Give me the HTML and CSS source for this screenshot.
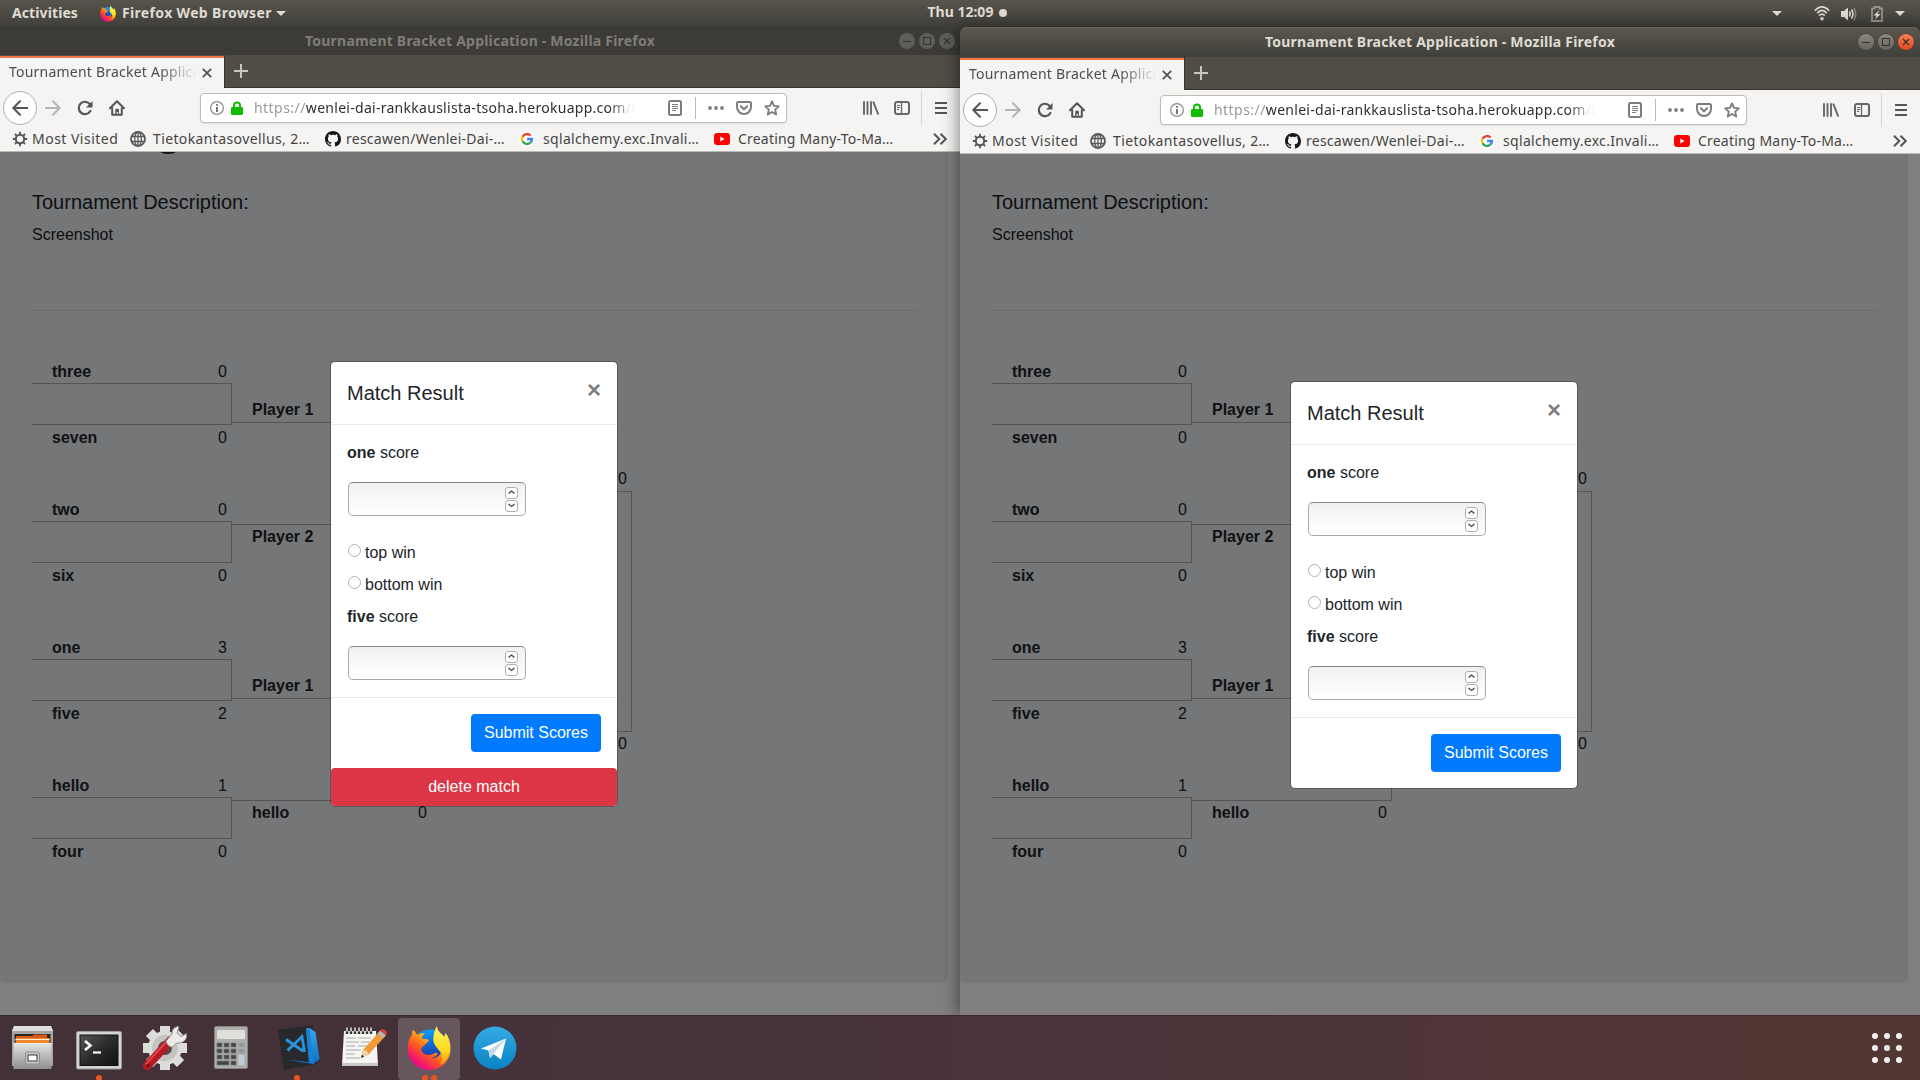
FILE: index.html
```
<!DOCTYPE html>
<html lang="en">
<head>
<meta charset="utf-8">
<title>Desktop</title>
<link rel="stylesheet" href="styles.css">
</head>
<body>
<svg class="defs" width="0" height="0" aria-hidden="true">
  <defs>
    <linearGradient id="g-flame" x1="0.9" y1="0.1" x2="0.2" y2="0.95">
      <stop offset="0" stop-color="#fff44f"/><stop offset=".3" stop-color="#ffb921"/><stop offset=".6" stop-color="#ff5a1f"/><stop offset=".85" stop-color="#f5156c"/><stop offset="1" stop-color="#d0109a"/>
    </linearGradient>
    <linearGradient id="g-wing" x1="0" y1="0" x2="0" y2="1"><stop offset="0" stop-color="#fff36a"/><stop offset=".6" stop-color="#ffdc1e"/><stop offset="1" stop-color="#ff9a16"/></linearGradient>
    <linearGradient id="g-globe" x1="0" y1="0" x2="0" y2="1"><stop offset="0" stop-color="#0a9dff"/><stop offset="1" stop-color="#20218f"/></linearGradient>
    <linearGradient id="g-metal" x1="0" y1="0" x2="0" y2="1"><stop offset="0" stop-color="#e4e4e2"/><stop offset="1" stop-color="#8f8f8d"/></linearGradient>
    <linearGradient id="g-screen" x1="0" y1="0" x2="1" y2="1"><stop offset="0" stop-color="#555"/><stop offset=".5" stop-color="#2b2b2b"/><stop offset="1" stop-color="#111"/></linearGradient>
    <linearGradient id="g-tg" x1="0" y1="0" x2="0" y2="1"><stop offset="0" stop-color="#34aae4"/><stop offset="1" stop-color="#0b82c2"/></linearGradient>
    <linearGradient id="g-vs" x1="0" y1="0" x2="0" y2="1"><stop offset="0" stop-color="#3ba4ee"/><stop offset="1" stop-color="#0b72c4"/></linearGradient>
  </defs>
  <symbol id="firefox" viewBox="0 0 44 46">
    <circle cx="23" cy="22" r="17.500" fill="url(#g-globe)"/>
    <path d="M6 5c2 1 3.500 3 4 5 2-1.500 5-2 8-1.500-2 1.500-3 3-3 5 2 .5 5 0 7 1.500-1 3-4 3.500-5 6-3 1.500-3.500 4-1.500 6.500 2.500 3 8 3 11.500 1 2.500-1.300 4-.5 3.500.8-1.500 2.500-4 3.500-7 3.700 8 1.500 13-6 11-13l4-12c3 3.500 5 9 5 15.500C43.500 36 34 45 22 45S.5 35.500.5 23.500C.5 17 3 12 5 10 4.500 8 5 6 6 5z" fill="url(#g-flame)"/>
    <path d="M30 1c0 5 4 7 7 10.500 5 6 6.500 13 4 20-1.500 4-5 7-8 8 3-5 3-9 0-13-5-6-7.500-9-6.500-15C27 6.500 28.500 3 30 1z" fill="url(#g-wing)"/>
  </symbol>
  <symbol id="info" viewBox="0 0 14 14"><circle cx="7" cy="7" r="6.400" fill="none" stroke="#8c8c8c" stroke-width="1.200"/><path d="M6 3h2v1.800H6zM6 6h2v5H6z" fill="#777"/></symbol>
  <symbol id="lock" viewBox="0 0 12 14"><path d="M3 7V4.500a3 3 0 0 1 6 0V7" fill="none" stroke="#12bc00" stroke-width="2"/><rect y="6" width="12" height="8" rx="1.200" fill="#12bc00"/></symbol>
  <symbol id="back" viewBox="0 0 16 16"><path d="M15.500 8H1.500M8 1.300 1.300 8 8 14.700" fill="none" stroke="currentColor" stroke-width="2" stroke-linecap="round" stroke-linejoin="round"/></symbol>
  <symbol id="forward" viewBox="0 0 16 16"><path d="M.5 8h14M8 1.300 14.700 8 8 14.700" fill="none" stroke="currentColor" stroke-width="2" stroke-linecap="round" stroke-linejoin="round"/></symbol>
  <symbol id="reload" viewBox="0 0 16 16"><path d="M13 4.300A6.200 6.200 0 1 0 13.400 11" fill="none" stroke="currentColor" stroke-width="2.200" stroke-linecap="round"/><path d="M15.500 1v6.500H9z" fill="currentColor"/></symbol>
  <symbol id="home" viewBox="0 0 16 16"><path d="M1 8.300 8 1.300l7 7M3.200 8v6.800h9.600V8" fill="none" stroke="currentColor" stroke-width="2" stroke-linecap="round" stroke-linejoin="round"/><path d="M6.300 15V9.500a.8.800 0 0 1 .8-.8h2a.8.800 0 0 1 .8.800V15H9v-3H7.700v3z" fill="currentColor"/></symbol>
  <symbol id="reader" viewBox="0 0 14 16"><rect x="1" y="1" width="12" height="14" rx="1.500" fill="none" stroke="#7d7d7d" stroke-width="2"/><path d="M4 4.500h6M4 6.500h6M4 8.500h6M4 10.500h4" stroke="#7d7d7d"/></symbol>
  <symbol id="dots" viewBox="0 0 16 4"><circle cx="2" cy="2" r="1.900" fill="#7d7d7d"/><circle cx="8" cy="2" r="1.900" fill="#7d7d7d"/><circle cx="14" cy="2" r="1.900" fill="#7d7d7d"/></symbol>
  <symbol id="pocket" viewBox="0 0 16 14"><path d="M2.200 1h11.600A1.200 1.200 0 0 1 15 2.200V6A7 7 0 0 1 1 6V2.200A1.200 1.200 0 0 1 2.200 1zM4.800 5.300 8 8.300l3.200-3" fill="none" stroke="#7d7d7d" stroke-width="2" stroke-linecap="round" stroke-linejoin="round"/></symbol>
  <symbol id="star" viewBox="0 0 16 16"><path d="m8 1.400 2 4.500 4.800.5-3.600 3.200 1 4.900L8 12l-4.200 2.500 1-4.900L1.200 6.400 6 5.900z" fill="none" stroke="#7d7d7d" stroke-width="1.900" stroke-linejoin="round"/></symbol>
  <symbol id="library" viewBox="0 0 16 14"><path d="M1 1v12M4.500 1v12M8 1v12M10.500 1.300 15 12.800" fill="none" stroke="#666" stroke-width="1.900" stroke-linecap="round"/></symbol>
  <symbol id="sidebar" viewBox="0 0 16 14"><rect x="1" y="1" width="14" height="12" rx="2" fill="none" stroke="#666" stroke-width="2"/><path d="M7.500 1v12" stroke="#666" stroke-width="1.300"/><path d="M3 4.500h3M3 6.500h3M3 8.500h2" stroke="#666"/></symbol>
  <symbol id="menu" viewBox="0 0 12 12"><path d="M0 1h12M0 6h12M0 11h12" stroke="#555" stroke-width="2"/></symbol>
  <symbol id="gear" viewBox="0 0 16 16"><circle cx="8" cy="8" r="4.200" fill="none" stroke="#555" stroke-width="2"/><path d="M8 .8v3M8 12.200v3M.8 8h3M12.200 8h3M3 3l1.800 1.800M11.200 11.200 13 13M3 13l1.800-1.800M11.200 4.800 13 3" stroke="#555" stroke-width="1.800"/></symbol>
  <symbol id="globe" viewBox="0 0 16 16"><g fill="none" stroke="#5a5a5a" stroke-width="1.300"><circle cx="8" cy="8" r="7" stroke-width="1.900"/><ellipse cx="8" cy="8" rx="3.300" ry="7"/><path d="M8 1v14M1.500 5.500h13M1.500 10.500h13"/></g></symbol>
  <symbol id="github" viewBox="0 0 16 16"><path fill="#181717" d="M8 0C3.580 0 0 3.580 0 8c0 3.540 2.290 6.530 5.470 7.590.4.070.55-.17.55-.38 0-.19-.01-.82-.01-1.490-2.010.37-2.530-.49-2.690-.94-.09-.23-.48-.94-.82-1.130-.28-.15-.68-.52-.01-.53.63-.01 1.080.58 1.230.82.720 1.210 1.870.87 2.330.66.070-.52.280-.87.510-1.070-1.780-.2-3.640-.89-3.640-3.950 0-.87.310-1.590.82-2.150-.08-.2-.36-1.020.08-2.120 0 0 .67-.21 2.200.82.640-.18 1.320-.27 2-.27s1.360.09 2 .27c1.530-1.040 2.200-.82 2.200-.82.440 1.100.16 1.920.08 2.120.51.560.82 1.270.82 2.150 0 3.070-1.870 3.750-3.650 3.950.29.250.54.730.54 1.480 0 1.070-.01 1.930-.01 2.200 0 .21.150.46.550.38A8.010 8.010 0 0 0 16 8c0-4.420-3.580-8-8-8z"/></symbol>
  <symbol id="google" viewBox="0 0 16 16"><circle cx="8" cy="8" r="8" fill="#fff"/><g fill="none" stroke-width="2.400"><path d="M11.600 4.600A5 5 0 0 0 3.500 5.800" stroke="#ea4335"/><path d="M3.500 5.800a5 5 0 0 0 0 4.500" stroke="#fbbc05"/><path d="M3.500 10.300a5 5 0 0 0 7.800 1.400" stroke="#34a853"/><path d="M11.300 11.700A5 5 0 0 0 13 8H8" stroke="#4285f4"/></g></symbol>
  <symbol id="youtube" viewBox="0 0 16 12"><rect width="16" height="12" rx="3" fill="#f00"/><path d="M6.300 3.500v5L10.700 6z" fill="#fff"/></symbol>
  <symbol id="chevrons" viewBox="0 0 14 12"><path d="m1 .7 5.300 5.300L1 11.300M7.500.7 12.800 6l-5.300 5.300" fill="none" stroke="#555" stroke-width="2"/></symbol>
  <symbol id="cross" viewBox="0 0 10 10"><path d="m.8.8 8.400 8.400M9.200.8.800 9.200" stroke="currentColor" stroke-width="1.800"/></symbol>
  <symbol id="plus" viewBox="0 0 14 14"><path d="M7 0v14M0 7h14" stroke="#c8c6c0" stroke-width="2"/></symbol>
  <symbol id="caret" viewBox="0 0 10 5"><path d="M0 0h10L5 5z" fill="currentColor"/></symbol>
  <symbol id="win-min" viewBox="0 0 16 16"><path d="M4 8.500h8" stroke="#33322e"/></symbol>
  <symbol id="win-max" viewBox="0 0 16 16"><rect x="4.500" y="4.500" width="7" height="7" fill="none" stroke="#33322e"/></symbol>
  <symbol id="win-close" viewBox="0 0 16 16"><path d="m5 5 6 6M11 5l-6 6" stroke="#33322e" stroke-width="1.200"/></symbol>
</svg>

<div class="desktop">
  <header class="panel">
    <div class="panel-side">
      <span class="panel-text activities">Activities</span>
      <svg class="panel-firefox" width="16" height="17"><use href="#firefox"/></svg>
      <span class="panel-text app-name">Firefox Web Browser</span>
      <svg class="app-caret" width="10" height="5"><use href="#caret"/></svg>
    </div>
    <div class="clock"><span class="panel-text clock-text">Thu 12:09</span><i class="clock-dot"></i></div>
    <div class="panel-side tray">
      <svg class="tray-menu" width="10" height="5"><use href="#caret"/></svg>
      <svg class="tray-wifi" width="16" height="15" viewBox="0 0 16 15" fill="none" stroke="#dfdbd2" stroke-width="1.700"><path d="M1 4.800C5-.5 11-.5 15 4.800M3.200 7.300c3-3.800 6.600-3.800 9.600 0M5.200 9.700c1.900-2.200 3.700-2.200 5.600 0"/><circle cx="8" cy="12.700" r="1.800" fill="#dfdbd2" stroke="none"/></svg>
      <svg class="tray-volume" width="16" height="14" viewBox="0 0 16 14"><path d="M0 4h3l4-3.500v13L3 10H0z" fill="#dfdbd2"/><path d="M8.500 4.500q1.500 2.500 0 5M10.500 2.500q3 4.500 0 9" fill="none" stroke="#dfdbd2" stroke-width="1.600"/><path d="M13 1q3.500 6 0 12" fill="none" stroke="#88867e" stroke-width="1.500"/></svg>
      <svg class="tray-battery" width="12" height="16" viewBox="0 0 12 16"><path d="M1 2.500h2.500V1h5v1.500H11V15H1z" fill="none" stroke="#96938a" stroke-width="1.800"/><path d="M8.500 4 2.500 9.500h3L4 13.500 9.500 8h-3z" fill="#dfdbd2"/></svg>
      <svg width="10" height="5"><use href="#caret"/></svg>
    </div>
  </header>

  <main class="workspace" id="workspace"></main>

  <footer class="dock">
    <div class="dock-slot">
      <svg width="44" height="46" viewBox="0 0 44 46"><path d="M3 1h37l2 5v35H1V6z" fill="#a5a5a3"/><path d="M3 1h37l2 5H1z" fill="#dededc"/><rect x="3.500" y="9" width="36" height="10" fill="#2b2422"/><path d="M5 11h16l2-1.500h13V14H5z" fill="#d55a1e"/><rect x="4.500" y="13" width="34" height="5" fill="#f0862d"/><path d="M4.500 14.500h34" stroke="#fff1cf" stroke-width="1.200"/><path d="M2.500 18h38v26h-38z" fill="url(#g-metal)"/><path d="M2.500 18.500h38" stroke="#eee"/><rect x="14.500" y="27" width="14" height="12" rx="2" fill="#c9c9c7" stroke="#8d8d8b"/><rect x="17" y="30" width="9" height="6" fill="#fff" stroke="#555" stroke-width="1.200"/></svg>
    </div>
    <div class="dock-slot">
      <svg width="46" height="46" viewBox="0 0 46 46"><rect x=".5" y="6.500" width="45" height="37.500" rx="1.500" fill="#d4d4d2" stroke="#9a9a98"/><rect x="4" y="10" width="38" height="30.500" fill="url(#g-screen)" stroke="#111"/><path d="m9 16 5.500 4.500L9 25" fill="none" stroke="#fff" stroke-width="2.500"/><path d="M17 27.500h8" stroke="#fff" stroke-width="2.200"/></svg>
      <span class="running"><i></i></span>
    </div>
    <div class="dock-slot">
      <svg width="46" height="46" viewBox="0 0 46 46"><g fill="#dcdcda"><circle cx="23" cy="23" r="17"/><path d="M18 1h10v44H18zM1 18h44v10H1z"/><path d="M18 1h10v44H18zM1 18h44v10H1z" transform="rotate(45 23 23)"/></g><circle cx="23" cy="23" r="13" fill="#c4c4c2"/><circle cx="23" cy="23" r="7" fill="#55484b"/><path d="M5 41 29 15" stroke="#b11c25" stroke-width="8.500" stroke-linecap="round"/><path d="M4 39 26 15" stroke="#e3434a" stroke-width="2" stroke-linecap="round"/><path d="m24 16 6-7q-.5-6 5.500-7.500l1.500.5-2 6 4 3.500 5.500-3q1 7-5 9-3 1-5 .5l-4 4q-5 0-6.500-6z" fill="#ebebe9" stroke="#8e8e8c"/><circle cx="6" cy="40.500" r="1.500" fill="#5c1116"/></svg>
    </div>
    <div class="dock-slot">
      <svg width="34" height="44" viewBox="0 0 34 44"><rect x=".5" y=".5" width="33" height="42" rx="1.500" fill="#adadab" stroke="#868684"/><rect x="3" y="4" width="28" height="9" rx="1" fill="#dfe0da"/><g fill="#454745" stroke="#767876" stroke-width=".7"><rect x="3" y="17" width="5" height="4"/><rect x="10" y="17" width="5" height="4"/><rect x="17" y="17" width="5" height="4"/><rect x="3" y="23" width="5" height="4"/><rect x="10" y="23" width="5" height="4"/><rect x="17" y="23" width="5" height="4"/><rect x="3" y="29" width="5" height="4"/><rect x="10" y="29" width="5" height="4"/><rect x="17" y="29" width="5" height="4"/><rect x="3" y="35" width="12" height="4"/><rect x="17" y="35" width="5" height="4"/></g><g fill="#8b9ba4"><rect x="24.500" y="17" width="6" height="4"/><rect x="24.500" y="23" width="6" height="4"/><rect x="24.500" y="29" width="6" height="10" fill="#c1cbd3"/></g></svg>
    </div>
    <div class="dock-slot slot-code">
      <svg width="42" height="46" viewBox="0 0 42 46"><path d="m0 5 35-5 4 39-33 6z" fill="#27292d"/><path d="M7 34.500 31 37l-3-33.500L31.500 3l6 4L41.500 34l-6 5z" fill="url(#g-vs)"/><path d="M28 3.500 31.500 3 35.500 39l-4.500-2z" fill="#1683d4"/><path d="M8 14.500 25 26M9.500 25.500 24 11.500l2.500 15.500" fill="none" stroke="#2b93de" stroke-width="2.800"/></svg>
      <span class="running"><i></i></span>
    </div>
    <div class="dock-slot slot-notes">
      <svg width="46" height="44" viewBox="0 0 46 44"><path d="M3 5h32l2 34H1z" fill="#f5f5f3"/><path d="M1 37h36v3H1z" fill="#c9c9c4"/><path d="M5 12h10M17 12h13M5 16h13M20 16h9M5 20h9M17 20h9M5 24h15M5 28h9M5 32h14" stroke="#a9aba5" stroke-width="1.200"/><path d="M6 2v6M10 2v6M14 2v6M18 2v6M22 2v6M26 2v6M30 2v6" stroke="#34302f" stroke-width="2.400"/><path d="M6 1.500v4M10 1.500v4M14 1.500v4M18 1.500v4M22 1.500v4M26 1.500v4M30 1.500v4" stroke="#e8e8e6" stroke-width="1.500"/><path d="m20 32 2-8L38 6l6 4.500-16.500 18z" fill="#f29a35"/><path d="m20 32 2-8q5 0 5.500 4.500z" fill="#ecd3a8"/><path d="m20 32 1-3.300 2 1.800z" fill="#222"/><path d="m36.500 7.500 2.500-3 6 4.500-2.500 3.300z" fill="#b7b7b5"/><path d="m39 4.500 2-1.500q4.500.5 5 4.500L45 9z" fill="#e23a3a"/></svg>
    </div>
    <div class="dock-slot active">
      <svg width="44" height="46"><use href="#firefox"/></svg>
      <span class="running"><i></i><i></i></span>
    </div>
    <div class="dock-slot">
      <svg width="44" height="44" viewBox="0 0 44 44"><circle cx="22" cy="22" r="21.500" fill="url(#g-tg)"/><path d="m8 22.500 25-10-5 21-7.500-5.500-3.500 4-1.500-7.500z" fill="#fff"/><path d="M15.500 24.500 33 12.500 20.500 28l-3.500 4z" fill="#c8daea"/></svg>
    </div>
    <svg class="app-grid" width="30" height="30" viewBox="0 0 30 30" fill="#eee"><circle cx="3" cy="3" r="3"/><circle cx="15" cy="3" r="3"/><circle cx="27" cy="3" r="3"/><circle cx="3" cy="15" r="3"/><circle cx="15" cy="15" r="3"/><circle cx="27" cy="15" r="3"/><circle cx="3" cy="27" r="3"/><circle cx="15" cy="27" r="3"/><circle cx="27" cy="27" r="3"/></svg>
  </footer>
</div>
<script src="app.js"></script>
</body>
</html>
```
FILE: styles.css
```
* { box-sizing: border-box; }
body { margin: 0; background: #3c3b37; }
svg { display: block; flex: none; }
.defs { position: absolute; }
.desktop { width: 1920px; height: 1080px; display: flex; flex-direction: column; overflow: hidden; font-family: "Noto Sans", sans-serif; }

/* Top panel */
.panel { height: 27px; flex: none; display: flex; justify-content: space-between; align-items: center; background: linear-gradient(#57544b, #403f3a); color: #dfdbd2; }
.panel-side { flex: 1; display: flex; align-items: center; }
.panel-text { font-weight: 700; font-size: 14px; line-height: 26px; height: 27px; white-space: nowrap; }
.activities { width: 88px; padding-left: 12px; letter-spacing: .1px; }
.panel-firefox { margin-left: 12px; }
.app-name { width: 154px; margin-left: 6px; letter-spacing: .34px; }
.clock { display: flex; align-items: center; gap: 5px; margin-left: 8px; width: 82px; transform: translate(12px, -1px); }
.clock-text { width: 66px; }
.clock-dot { width: 8px; height: 8px; border-radius: 50%; background: #dfdbd2; }
.tray { justify-content: flex-end; padding-right: 15px; }
.tray-menu { margin-right: 32px; }
.tray-wifi { margin-right: 11px; }
.tray-volume { margin-right: 14px; }
.tray-battery { margin-right: 12px; }

/* Windows */
.workspace { height: 988px; flex: none; display: grid; grid-template-columns: 960px 960px; background: #3c3b37; }
.window { height: 988px; display: flex; flex-direction: column; position: relative; overflow: hidden; --title-h: 28px; }
.window.focused { --title-h: 30px; overflow: visible; box-shadow: -2px 0 16px rgba(0,0,0,.45); border-radius: 7px 7px 0 0; }
.titlebar { height: var(--title-h); flex: none; display: grid; grid-template-columns: 1fr auto 1fr; align-items: center; background: #3c3b37; color: #807d78; }
.focused .titlebar { background: linear-gradient(#5b584f, #403f3a); border-radius: 7px 7px 0 0; box-shadow: inset 0 1px #68655b; color: #dfdbd2; }
.window-title { grid-column: 2; font-weight: 700; font-size: 14px; line-height: 28px; letter-spacing: .21px; white-space: nowrap; }
.window-buttons { justify-self: end; display: flex; gap: 4px; padding-right: 5px; }
.window-button { width: 16px; height: 16px; border-radius: 50%; background: #5f5d57; }
.focused .window-buttons { padding-right: 6px; }
.focused .window-button { background: linear-gradient(#8a8880, #66645d); box-shadow: 0 0 0 .5px #33322e; }
.focused .window-button.close { background: linear-gradient(#f37e58, #e6481a); }

.tabbar { height: 33px; flex: none; display: flex; align-items: stretch; background: #504d45; box-shadow: inset 0 -1px #35342f; }
.tab { width: 224px; display: flex; align-items: center; padding-left: 9px; border-top: 2px solid #f07746; background: #f5f4f2; color: #4c4c4c; margin-top: 1px; }
.tab-title { width: 188px; overflow: hidden; white-space: nowrap; font-size: 14px; line-height: 26px; height: 28px; letter-spacing: .22px; -webkit-mask: linear-gradient(90deg, #000 150px, transparent 188px); mask: linear-gradient(90deg, #000 150px, transparent 188px); }
.tab-close { margin-left: 5px; color: #555; }
.new-tab { display: flex; align-items: center; padding-left: 9px; padding-bottom: 2px; border-left: 1px solid #35342f; }

.navbar { height: 40px; flex: none; display: flex; align-items: center; background: #f5f4f2; padding-left: 3px; color: #555; }
.back-button { width: 34px; height: 34px; border-radius: 50%; border: 1px solid #b0afad; background: #fdfdfd; display: grid; place-items: center; }
.nav-forward { margin-left: 8px; color: #b5b4b2; }
.nav-reload { margin-left: 16px; }
.nav-home { margin-left: 16px; }
.urlbar { width: 587px; height: 30px; margin-left: 75px; display: flex; align-items: center; padding: 0 6px 0 9px; border: 1px solid #bebdba; border-radius: 4px; background: #fff; box-shadow: 0 1px 2px rgba(0,0,0,.08); }
.url-lock { margin-left: 7px; }
.url-text { width: 382px; margin-left: 11px; overflow: hidden; white-space: nowrap; font-size: 14px; line-height: 26px; letter-spacing: .28px; color: #999; -webkit-mask: linear-gradient(90deg, #000 354px, transparent 382px); mask: linear-gradient(90deg, #000 354px, transparent 382px); }
.url-scheme { letter-spacing: .45px; }
.url-host { color: #2f2f2f; }
.url-reader { margin-left: 32px; }
.url-divider { width: 1px; height: 22px; margin: 0 12px 0 13px; background: #bbb; }
.url-pocket { margin-left: 12px; }
.url-star { margin-left: 12px; }
.nav-library { margin-left: 76px; }
.nav-sidebar { margin-left: 15px; }
.nav-divider { width: 1px; height: 34px; margin: 0 13px 0 11px; background: #d5d4d2; }

.bookmarks { height: 24px; flex: none; display: flex; align-items: center; padding-bottom: 1px; background: #f5f4f2; border-bottom: 1px solid #bbb9b5; color: #444; font-size: 14px; line-height: 22px; white-space: nowrap; }
.bookmark { display: flex; align-items: center; }
.bookmark:nth-child(1) { width: 118px; padding-left: 12px; gap: 4px; letter-spacing: .48px; }
.bookmark:nth-child(2) { width: 195px; padding-left: 12px; gap: 7px; letter-spacing: .38px; }
.bookmark:nth-child(3) { width: 194px; padding-left: 12px; gap: 5px; letter-spacing: .25px; }
.bookmark:nth-child(4) { width: 195px; padding-left: 12px; gap: 8px; letter-spacing: .33px; }
.bookmark:nth-child(5) { width: 231px; padding-left: 12px; gap: 8px; letter-spacing: .2px; }

/* Web page */
.page { flex: 1; min-height: 0; position: relative; overflow: hidden; display: flex; flex-direction: column; justify-content: flex-end; background: #fff; padding-bottom: 32px; font-family: "Liberation Sans", Arial, sans-serif; font-size: 16px; line-height: 24px; color: #212529; }
.jumbotron { width: 948px; flex: none; height: 851px; background: #e9ecef; border-radius: 5px; padding: 0 32px; display: flex; flex-direction: column; }
.page-title { margin: -43px 0 34px 121px; font-size: 56px; line-height: 67px; font-weight: 500; height: 67px; }
.page-subtitle { margin: 0 0 9px; font-size: 20px; line-height: 24px; font-weight: 500; }
.page-text { margin: 0; }
.rule { width: 884px; border: 0; border-top: 1px solid rgba(0,0,0,.1); margin: 63px 0 48px; }
.bracket { display: flex; height: 504px; }
.round { width: 200px; display: flex; flex-direction: column; }
.round-1 { gap: 48px; line-height: 26px; }
.round-2 { gap: 125px; padding-top: 39px; }
.round-3 { padding-top: 108px; }
.team { height: 25px; display: flex; justify-content: space-between; padding: 0 5px 0 20px; }
.team-top { border-bottom: 1px solid #aaa; }
.team-bottom { border-top: 1px solid #aaa; }
.connector { border-right: 1px solid #aaa; height: 40px; }
.round-2 .connector { height: 101px; }
.round-3 .connector { height: 239px; }

.backdrop { position: absolute; inset: 0; background: rgba(0,0,0,.5); }
.modal { position: absolute; left: 330px; bottom: 208px; width: 288px; background: #fff; background-clip: padding-box; border: 1px solid rgba(0,0,0,.25); border-radius: 5px; }
.focused .modal { bottom: 226px; }
.modal-header { height: 63px; padding: 16px; display: flex; justify-content: space-between; border-bottom: 1px solid #e9ecef; }
.modal-title { margin: 0; font-size: 20px; line-height: 30px; font-weight: 500; }
.modal-close { font-size: 24px; line-height: 24px; font-weight: 700; color: #7f7f7f; }
.modal-body { height: 272px; padding: 16px; }
.score-label { margin: 0 0 17px; }
.score-input { width: 178px; height: 34px; margin: 0 0 25px 1px; display: flex; flex-direction: column; align-items: flex-end; justify-content: center; gap: 1px; padding-right: 7px; border: 1px solid #a9a9a9; border-top-color: #888; border-radius: 5px; background: linear-gradient(#f1f1f1, #fff); }
.choice { display: flex; align-items: center; gap: 4px; height: 24px; margin-bottom: 8px; }
.radio { width: 13px; height: 13px; border: 1px solid #b3b3b3; border-radius: 50%; margin: -5px 0 0 1px; background: #fff; }
.modal-footer { height: 71px; border-top: 1px solid #e9ecef; padding: 16px; display: flex; justify-content: flex-end; }
.button { height: 38px; line-height: 38px; border-radius: 4px; color: #fff; text-align: center; }
.submit { width: 130px; background: #007bff; }
.delete { background: #dc3545; }

/* Dock */
.dock { height: 65px; flex: none; position: relative; display: flex; align-items: center; background: linear-gradient(90deg, #423136, #46323a 30%, #4c343a 60%, #533733); box-shadow: inset 0 1px rgba(0,0,0,.2); }
.dock-slot { width: 66px; height: 65px; display: grid; place-items: center; position: relative; padding: 1px 0 0; }
.slot-code { padding-left: 4px; }
.slot-notes { padding-left: 2px; }
.dock-slot.active::before { content: ""; position: absolute; left: 2px; top: 3px; width: 62px; height: 62px; border-radius: 4px; background: rgba(255,255,255,.18); }
.dock-slot svg { position: relative; }
.running { position: absolute; bottom: -1px; left: 0; right: 0; display: flex; justify-content: center; gap: 3px; }
.running i { width: 6px; height: 6px; border-radius: 50%; background: #e95420; }
.app-grid { margin-left: auto; margin-right: 18px; }
```
FILE: app.js
```
const icon = (name, w, h, cls = '') =>
  `<svg class="${cls}" width="${w}" height="${h}"><use href="#${name}"/></svg>`;

const team = (side, [name, score]) =>
  `<div class="team team-${side}"><b>${name}</b><span>${score}</span></div>`;

const game = ([top, bottom]) =>
  `<div class="game">${team('top', top)}<div class="connector"></div>${team('bottom', bottom)}</div>`;

const rounds = [
  [
    [['three', 0], ['seven', 0]],
    [['two', 0], ['six', 0]],
    [['one', 3], ['five', 2]],
    [['hello', 1], ['four', 0]],
  ],
  [
    [['Player 1', ''], ['Player 2', '']],
    [['Player 1', ''], ['hello', 0]],
  ],
  [[['', 0], ['', 0]]],
];

const bracket = rounds
  .map((games, i) => `<div class="round round-${i + 1}">${games.map(game).join('')}</div>`)
  .join('');

const bookmarks = [
  ['gear', 16, 16, 'Most Visited'],
  ['globe', 16, 16, 'Tietokantasovellus, 2…'],
  ['github', 16, 16, 'rescawen/Wenlei-Dai-…'],
  ['google', 16, 16, 'sqlalchemy.exc.Invali…'],
  ['youtube', 16, 12, 'Creating Many-To-Ma…'],
]
  .map(([name, w, h, label]) => `<div class="bookmark">${icon(name, w, h)}<span class="bookmark-label">${label}</span></div>`)
  .join('');

const spinner = ['M3.500 6.500 6.500 4l3 2.500', 'M3.500 4 6.500 6.500l3-2.500']
  .map((d) => `<svg width="13" height="12" viewBox="0 0 13 12"><rect x=".5" y=".5" width="12" height="11" rx="2.500" fill="#fff" stroke="#b0b0b0"/><path d="${d}" fill="none" stroke="#444" stroke-width="1.300"/></svg>`)
  .join('');

const scoreField = (name) =>
  `<p class="score-label"><b>${name}</b> score</p><div class="score-input">${spinner}</div>`;

const choice = (label) => `<div class="choice"><i class="radio"></i>${label}</div>`;

const browserWindow = ({ focused, canDelete }) => `
<section class="window ${focused ? 'focused' : ''}">
  <div class="titlebar">
    <div class="window-title">Tournament Bracket Application - Mozilla Firefox</div>
    <div class="window-buttons">
      ${icon('win-min', 16, 16, 'window-button')}${icon('win-max', 16, 16, 'window-button')}${icon('win-close', 16, 16, 'window-button close')}
    </div>
  </div>
  <div class="tabbar">
    <div class="tab"><span class="tab-title">Tournament Bracket Application</span>${icon('cross', 10, 10, 'tab-close')}</div>
    <div class="new-tab">${icon('plus', 14, 14)}</div>
  </div>
  <div class="navbar">
    <div class="back-button">${icon('back', 16, 16)}</div>
    ${icon('forward', 16, 16, 'nav-forward')}${icon('reload', 16, 16, 'nav-reload')}${icon('home', 16, 16, 'nav-home')}
    <div class="urlbar">
      ${icon('info', 14, 14)}${icon('lock', 12, 14, 'url-lock')}
      <span class="url-text"><span class="url-scheme">https://</span><span class="url-host">wenlei-dai-rankkauslista-tsoha.herokuapp.com</span>/t</span>
      ${icon('reader', 14, 16, 'url-reader')}<i class="url-divider"></i>
      ${icon('dots', 16, 4)}${icon('pocket', 16, 14, 'url-pocket')}${icon('star', 16, 16, 'url-star')}
    </div>
    ${icon('library', 16, 14, 'nav-library')}${icon('sidebar', 16, 14, 'nav-sidebar')}<i class="nav-divider"></i>${icon('menu', 12, 12)}
  </div>
  <div class="bookmarks">${bookmarks}${icon('chevrons', 14, 12)}</div>
  <div class="page">
    <div class="jumbotron">
      <h1 class="page-title">g</h1>
      <h5 class="page-subtitle">Tournament Description:</h5>
      <p class="page-text">Screenshot</p>
      <hr class="rule">
      <div class="bracket">${bracket}</div>
    </div>
    <div class="backdrop"></div>
    <div class="modal">
      <div class="modal-header"><h5 class="modal-title">Match Result</h5><span class="modal-close">×</span></div>
      <div class="modal-body">${scoreField('one')}${choice('top win')}${choice('bottom win')}${scoreField('five')}</div>
      <div class="modal-footer"><div class="button submit">Submit Scores</div></div>
      ${canDelete ? '<div class="button delete">delete match</div>' : ''}
    </div>
  </div>
</section>`;

document.getElementById('workspace').innerHTML =
  browserWindow({ focused: false, canDelete: true }) +
  browserWindow({ focused: true, canDelete: false });
```
